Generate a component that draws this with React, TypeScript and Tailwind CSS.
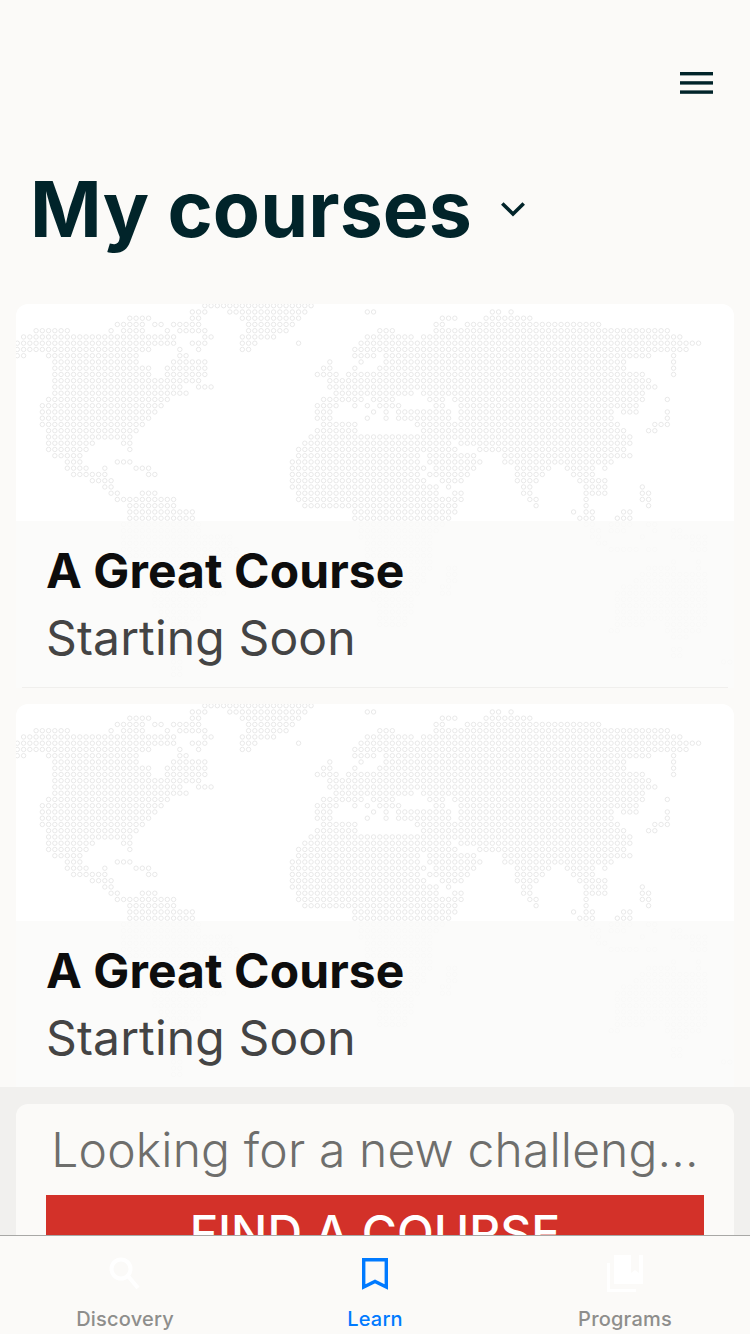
const font = { fontFamily: 'Inter, "Liberation Sans", sans-serif' };

// dot map runs, pairs of start/end measured on a 3x scale
const west: number[][] = [
  [615, 950],
  [560, 625, 675, 930, 1090, 1125],
  [385, 455, 560, 610, 710, 910],
  [350, 435, 465, 495, 520, 610, 730, 890],
  [100, 205, 330, 345, 370, 435, 485, 510, 540, 625, 730, 875],
  [62, 535, 600, 645, 710, 820, 1090, 1125],
  [48, 535, 560, 625, 710, 780, 885, 910, 1070, 1125],
  [48, 455, 540, 550, 595, 610, 710, 760, 1055, 1125],
  [48, 75, 140, 420, 540, 570, 1055, 1125],
  [155, 420, 520, 625, 975, 990, 1075, 1100],
  [155, 455, 500, 625, 960, 990, 1050, 1065],
  [155, 455, 485, 625, 940, 1010, 1035, 1125],
  [155, 600, 975, 1125],
  [155, 550, 595, 645, 975, 1125],
  [155, 570, 995, 1125],
  [140, 510, 960, 1085, 1110, 1125],
  [120, 495, 940, 1010, 1050, 1065, 1090, 1105],
  [120, 475, 940, 990, 1110, 1125],
  [120, 455, 940, 990, 1090, 1105],
  [120, 435, 960, 1065],
  [140, 420, 940, 1065],
  [140, 400, 920, 1125],
  [140, 285, 365, 400, 900, 1125],
  [140, 265, 385, 400, 880, 1125],
  [155, 250, 880, 1125],
  [195, 250, 350, 400, 860, 1125],
  [195, 265, 310, 325, 405, 455, 860, 1125],
  [215, 325, 445, 475, 860, 1125],
  [270, 340, 860, 1125],
  [310, 345, 860, 1125],
  [330, 360, 425, 475, 880, 1125],
  [350, 530, 880, 1125],
  [385, 530, 900, 1125],
  [385, 590, 1050, 1125],
  [385, 590, 1050, 1125],
  [365, 610, 1070, 1125],
  [365, 610, 1070, 1125],
  [365, 700, 1070, 1125],
  [365, 700, 1090, 1125],
  [365, 720, 1090, 1125],
  [375, 720, 1090, 1125],
  [460, 680, 1100, 1125],
  [460, 680, 1100, 1125],
  [460, 680, 1110, 1125],
  [460, 680, 1110, 1125],
  [460, 680, 1110, 1125],
  [460, 680, 1110, 1125],
  [460, 630, 1110, 1125],
  [460, 630],
  [480, 610],
  [480, 610],
  [480, 570],
  [480, 570],
  [480, 570],
  [480, 570],
  [480, 570],
  [510, 550],
  [510, 550],
  [510, 550],
  [510, 550],
];

const east: number[][] = [
  [],
  [345, 380, 400, 415],
  [195, 245, 325, 475],
  [175, 210, 270, 680],
  [0, 55, 175, 890],
  [0, 110, 135, 930],
  [0, 985],
  [0, 945],
  [20, 835, 880, 910],
  [20, 760, 880, 910],
  [0, 760, 880, 910],
  [0, 815, 895, 910],
  [0, 835],
  [0, 855],
  [0, 110, 135, 815],
  [0, 55, 155, 215, 230, 815, 860, 890],
  [0, 75, 175, 210, 250, 795, 860, 875],
  [20, 35, 60, 225, 250, 720, 745, 795, 875, 890],
  [20, 35, 60, 225, 250, 720, 785, 795, 860, 890],
  [120, 740, 785, 795, 840, 890],
  [135, 760, 820, 855],
  [0, 780],
  [0, 225, 250, 780],
  [0, 245, 310, 760],
  [0, 130, 155, 300, 385, 780],
  [0, 130, 155, 320, 385, 720],
  [0, 150, 175, 300, 425, 530, 575, 665, 685, 700],
  [0, 130, 155, 285, 425, 510, 595, 665, 785, 795],
  [0, 150, 195, 265, 425, 490, 615, 700, 785, 795],
  [0, 130, 135, 190, 210, 225, 445, 475, 630, 700, 785, 815],
  [0, 150, 155, 190, 230, 265, 445, 475, 630, 700, 800, 835],
  [0, 265, 465, 490, 630, 645, 800, 835],
  [0, 245, 480, 490, 630, 645, 820, 835],
  [0, 245, 590, 610, 630, 665, 745, 775],
  [0, 225, 610, 665, 725, 775],
  [0, 210, 630, 660, 705, 780, 810, 820, 840, 855],
  [0, 190, 650, 680, 705, 760, 840, 855, 880, 930],
  [0, 170, 650, 680, 785, 815, 895, 990],
  [0, 170, 670, 700, 935, 1005],
  [0, 170, 705, 795, 820, 855, 935, 975, 990, 1005],
  [0, 170],
  [0, 170, 880, 910, 955, 970],
  [0, 170, 215, 245, 820, 910, 955, 970],
  [0, 150, 215, 245, 800, 990],
  [0, 150, 215, 245, 780, 990],
  [0, 130, 190, 225, 745, 1005],
  [0, 130, 190, 225, 725, 1005],
  [0, 110, 725, 1005],
  [0, 110, 725, 1005],
  [0, 110, 725, 1005],
  [0, 90, 725, 990],
  [0, 90, 725, 815, 860, 990],
  [705, 740, 860, 970],
  [880, 950],
  [],
  [895, 930],
  [895, 915],
  [1030, 1065],
];

function collectDots() {
  const dots: { x: number; y: number }[] = [];
  const rows = Math.max(west.length, east.length);
  for (let i = 0; i < rows; i++) {
    const seen = new Set<number>();
    const runs = [
      ...(west[i] ?? []),
      ...(east[i] ?? []).map((v) => v + 1125),
    ];
    for (let r = 0; r < runs.length; r += 2) {
      const from = Math.round((runs[r] + 8 - 52) / 18.75);
      const to = Math.round((runs[r + 1] - 8 - 52) / 18.75);
      for (let k = Math.max(from, 0); k <= to; k++) seen.add(k);
    }
    seen.forEach((k) => {
      dots.push({ x: (52 + 18.75 * k) / 3 - 16, y: 1.7 + 6.25 * i });
    });
  }
  return dots;
}

const dots = collectDots();

function WorldMap() {
  return (
    <svg width="718" height="384" viewBox="0 0 718 384" className="absolute left-0 top-0" fill="none">
      {dots.map((d, i) => (
        <circle key={i} cx={d.x} cy={d.y} r="2.2" stroke="#e5e5e5" strokeWidth="0.9" />
      ))}
    </svg>
  );
}

function CourseCard() {
  return (
    <div className="relative mx-4 h-[384px] overflow-hidden rounded-t-[12px] bg-white">
      <WorldMap />
      <div className="absolute bottom-0 left-0 right-0 flex h-[167px] flex-col bg-[#fbfbf9]/[0.88]">
        <div className="px-[30px] pt-[20px]">
          <p className="text-[48px] font-bold leading-[60px] tracking-[0.08px] text-[#0d0d0d]">A Great Course</p>
          <p className="mt-[7px] text-[48px] font-normal leading-[60px] tracking-[0.15px] text-[#444444]">Starting Soon</p>
        </div>
        <div className="mx-[6px] mt-auto h-px bg-[#f0efed]" />
      </div>
    </div>
  );
}

function TabItem({ label, active, children }: { label: string; active?: boolean; children: React.ReactNode }) {
  return (
    <div className="flex flex-1 flex-col items-center">
      <div className="flex h-[54px] items-end">{children}</div>
      <span className={`mt-[17px] text-[20px] font-medium leading-[24px] tracking-[0.2px] ${active ? 'text-[#007aff]' : 'text-[#8e8e8c]'}`}>
        {label}
      </span>
    </div>
  );
}

export default function App() {
  return (
    <div className="flex h-[1334px] w-[750px] flex-col overflow-hidden bg-[#fbfaf8]" style={font}>
      <div className="min-h-0 flex-1 overflow-hidden">
        <div className="flex justify-end pr-[37px] pt-[72px]">
          <svg width="33" height="22" viewBox="0 0 33 22" fill="#01242a">
            <rect x="0" y="0" width="33" height="3.4" />
            <rect x="0" y="9.2" width="33" height="3.4" />
            <rect x="0" y="18.4" width="33" height="3.4" />
          </svg>
        </div>
        <div className="mt-[60px] flex h-[110px] items-center pl-[30px]">
          <h1 className="w-[441px] whitespace-nowrap text-[77px] font-bold leading-[110px] tracking-[0.1px] text-[#01242a]">My courses</h1>
          <svg width="24" height="15" viewBox="0 0 24 15" fill="none" stroke="#01242a" strokeWidth="3.6" className="ml-[30px]">
            <polyline points="1.3,1.5 12,12 22.7,1.5" />
          </svg>
        </div>
        <div className="mt-[40px] flex flex-col gap-4">
          <CourseCard />
          <CourseCard />
        </div>
        <div className="relative -mt-px h-[149px] bg-[#f1f0ee] px-4 pt-[17px]">
          <div className="h-[200px] rounded-[12px] bg-[#fbfaf8] px-[30px]">
            <p className="truncate pt-[12px] text-center text-[48px] font-light leading-[68px] tracking-[0.15px] text-[#6e6e6c]">
              Looking for a new challeng...
            </p>
            <div className="mt-[11px] flex h-[80px] items-start justify-center bg-[#d33129] pt-[8px] text-[48px] font-medium leading-[60px] text-white">
              FIND A COURSE
            </div>
          </div>
        </div>
      </div>
      <div className="flex h-[99px] shrink-0 border-t border-[#a8a8a6] bg-[#fbfaf8]">
        <TabItem label="Discovery">
          <svg width="34" height="34" viewBox="0 0 34 34" fill="none" stroke="#ffffff" strokeWidth="4" className="mb-[-1px]">
            <circle cx="13" cy="12" r="9.5" />
            <line x1="20" y1="19" x2="30" y2="31" />
          </svg>
        </TabItem>
        <TabItem label="Learn" active>
          <svg width="26" height="32" viewBox="0 0 26 32" fill="none" stroke="#007aff" strokeWidth="3.4">
            <path d="M1.7 1.7H24.3V29L13 23.5L1.7 29Z" />
          </svg>
        </TabItem>
        <TabItem label="Programs">
          <svg width="37" height="37" viewBox="0 0 37 37" className="mb-[-2px]">
            <path d="M7 0H36V29H7Z M24 0V18L28 15L32 18V0Z" fill="#ffffff" fillRule="evenodd" />
            <path d="M1.5 8V35.5H29" fill="none" stroke="#ffffff" strokeWidth="3" />
          </svg>
        </TabItem>
      </div>
    </div>
  );
}
